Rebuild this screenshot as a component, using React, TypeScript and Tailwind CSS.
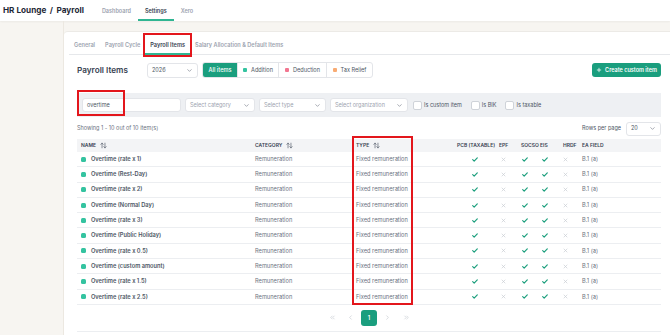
import {
  ArrowUpDown,
  ChevronDown,
  ChevronLeft,
  ChevronRight,
  ChevronsLeft,
  ChevronsRight,
  Plus,
} from "lucide-react";

const rows = [
  "Overtime (rate x 1)",
  "Overtime (Rest-Day)",
  "Overtime (rate x 2)",
  "Overtime (Normal Day)",
  "Overtime (rate x 3)",
  "Overtime (Public Holiday)",
  "Overtime (rate x 0.5)",
  "Overtime (custom amount)",
  "Overtime (rate x 1.5)",
  "Overtime (rate x 2.5)",
];

function Check() {
  return (
    <svg width="6" height="5" viewBox="0 0 14 12" className="text-[#1a9e7c]">
      <path d="M1.5 6.5 L5 10 L12.5 2" fill="none" stroke="currentColor" strokeWidth="2.8" strokeLinecap="round" strokeLinejoin="round" />
    </svg>
  );
}

function Cross() {
  return (
    <svg width="5" height="5" viewBox="0 0 10 10" className="text-[#c9cdd3]">
      <path d="M2 2 L8 8 M8 2 L2 8" fill="none" stroke="currentColor" strokeWidth="1.4" strokeLinecap="round" />
    </svg>
  );
}

function Select({ label, width, muted = true }: { label: string; width: string; muted?: boolean }) {
  return (
    <div
      className={`flex items-center justify-between h-[14px] bg-white border border-[#e3e5e9] rounded-[3px] pl-[4px] pr-[4px] ${width}`}
    >
      <span className={`text-[5.5px] whitespace-nowrap ${muted ? "text-[#9ca3af]" : "text-[#4b5563]"}`}>{label}</span>
      <ChevronDown size={7} className="text-[#6b7280]" strokeWidth={2} />
    </div>
  );
}

function CheckBox({ label }: { label: string }) {
  return (
    <div className="flex items-center gap-[2px]">
      <div className="w-[9px] h-[9px] bg-white border border-[#cfd3d9] rounded-[2px]" />
      <span className="text-[5.5px] text-[#4b5563]">{label}</span>
    </div>
  );
}

function SortHead({ label }: { label: string }) {
  return (
    <div className="flex items-center gap-[4px]">
      <span>{label}</span>
      <ArrowUpDown size={7} strokeWidth={2} className="text-[#374151]" />
    </div>
  );
}

export default function App() {
  return (
    <div className="relative w-[670px] h-[335px] overflow-hidden bg-[#f7f5f1] font-['Inter',sans-serif]">
      <header className="h-[21px] bg-white flex items-stretch pl-[3px] shadow-[0_1px_2px_rgba(0,0,0,0.05)]">
        <div className="flex items-center text-[8.2px] font-bold text-[#1f2937] whitespace-nowrap">
          HR Lounge<span className="mx-[3.5px]">/</span>Payroll
        </div>
        <nav className="flex items-stretch ml-[11px] text-[5.5px] font-semibold whitespace-nowrap">
          <div className="flex items-center px-[7px] pt-[4px] border-b-2 border-transparent text-[#9ca3af]">Dashboard</div>
          <div className="flex items-center px-[7px] pt-[4px] border-b-2 border-[#2fb592] text-[#374151]">Settings</div>
          <div className="flex items-center px-[7px] pt-[4px] border-b-2 border-transparent text-[#9ca3af]">Xero</div>
        </nav>
      </header>

      <div className="flex h-[314px]">
        <div className="w-[64px] shrink-0 border-r border-[#ece8e1]" />
        <div className="flex-1 mt-[10px] bg-white rounded-tl-[4px] border-t border-[#eceae6]">
          <div className="ml-[5px] flex h-[23px] border-b border-[#e6e8eb] text-[5.6px] font-semibold whitespace-nowrap">
            <div className="flex items-center px-[5px] pt-[5px] border-b-2 border-transparent -mb-px text-[#9ca3af]">General</div>
            <div className="flex items-center px-[5px] pt-[5px] border-b-2 border-transparent -mb-px text-[#9ca3af]">Payroll Cycle</div>
            <div className="flex items-center px-[5px] pt-[5px] border-b-2 border-[#2fb592] -mb-px text-[#374151]">Payroll Items</div>
            <div className="flex items-center px-[5px] pt-[5px] border-b-2 border-transparent -mb-px text-[#9ca3af]">Salary Allocation &amp; Default Items</div>
          </div>

          <div className="pl-[13px] pr-[9px]">
            <div className="mt-[7px] h-[16px] flex items-center">
              <h1 className="text-[8.2px] font-semibold text-[#374151] w-[70px] whitespace-nowrap">Payroll Items</h1>
              <div className="flex items-center justify-between w-[51px] h-[15px] border border-[#e3e5e9] rounded-[3px] pl-[4px] pr-[4px]">
                <span className="text-[5.5px] text-[#4b5563]">2026</span>
                <ChevronDown size={7} className="text-[#6b7280]" strokeWidth={2} />
              </div>
              <div className="ml-[4px] flex h-[16px] rounded-[3px] border border-[#e3e5e9] overflow-hidden text-[5.6px] whitespace-nowrap">
                <div className="w-[34px] flex items-center justify-center bg-[#1a9e7e] text-white font-medium">All items</div>
                <div className="w-[41px] flex items-center justify-center gap-[4px] border-l border-[#e3e5e9] text-[#4b5563]">
                  <span className="w-[4px] h-[4px] rounded-[1px] bg-[#34c3a0]" />Addition
                </div>
                <div className="w-[48px] flex items-center justify-center gap-[4px] border-l border-[#e3e5e9] text-[#4b5563]">
                  <span className="w-[4px] h-[4px] rounded-[1px] bg-[#f27690]" />Deduction
                </div>
                <div className="w-[46px] flex items-center justify-center gap-[4px] border-l border-[#e3e5e9] text-[#4b5563]">
                  <span className="w-[4px] h-[4px] rounded-[1px] bg-[#f8ab73]" />Tax Relief
                </div>
              </div>
              <button className="ml-auto w-[69px] h-[14px] flex items-center justify-center gap-[3px] rounded-[3px] bg-[#1a9e7e] text-white text-[5.5px] font-semibold whitespace-nowrap">
                <Plus size={6} strokeWidth={3} />
                Create custom item
              </button>
            </div>

            <div className="mt-[15px] h-[24px] bg-[#eef0f3] flex items-center pl-[5px] gap-[4px]">
              <div className="w-[99px] h-[14px] bg-white border border-[#e3e5e9] rounded-[3px] pl-[4px] flex items-center text-[5.5px] text-[#4b5563]">
                overtime
              </div>
              <Select label="Select category" width="w-[70px]" />
              <Select label="Select type" width="w-[67px]" />
              <Select label="Select organization" width="w-[78px]" />
              <div className="ml-[1px] flex items-center gap-[9px]">
                <CheckBox label="Is custom item" />
                <CheckBox label="Is BIK" />
                <CheckBox label="Is taxable" />
              </div>
            </div>

            <div className="mt-[4px] h-[15px] flex items-center justify-between">
              <span className="text-[5.5px] text-[#6b7280]">Showing 1 - 10 out of 10 item(s)</span>
              <div className="flex items-center gap-[5px]">
                <span className="text-[5.5px] text-[#4b5563]">Rows per page</span>
                <Select label="20" width="w-[35px]" muted={false} />
              </div>
            </div>

            <div className="mt-[3px] whitespace-nowrap">
              <div className="grid grid-cols-[178px_101px_101px_42px_22px_19px_23px_19px_1fr] h-[13px] items-center bg-[#f3f4f6] font-semibold text-[#374151] uppercase text-[5px]">
                <div className="pl-[4px]"><SortHead label="Name" /></div>
                <div><SortHead label="Category" /></div>
                <div><SortHead label="Type" /></div>
                <div>PCB (Taxable)</div>
                <div>EPF</div>
                <div>SOCSO</div>
                <div>EIS</div>
                <div>HRDF</div>
                <div>EA Field</div>
              </div>
              {rows.map((name) => (
                <div
                  key={name}
                  className="grid grid-cols-[178px_101px_101px_42px_22px_19px_23px_19px_1fr] h-[15.3px] items-center border-b border-[#eceef1] text-[5.7px]"
                >
                  <div className="pl-[4px] flex items-center gap-[5px]">
                    <span className="w-[5px] h-[5px] rounded-[1.5px] bg-[#34c3a0]" />
                    <span className="font-semibold text-[#4b5563]">{name}</span>
                  </div>
                  <div className="text-[#6b7280]">Remuneration</div>
                  <div className="text-[#6b7280]">Fixed remuneration</div>
                  <div className="pl-[15px] flex"><Check /></div>
                  <div className="pl-[2px] flex"><Cross /></div>
                  <div className="pl-[1px] flex"><Check /></div>
                  <div className="pl-[2px] flex"><Check /></div>
                  <div className="pl-[0px] flex"><Cross /></div>
                  <div className="text-[#6b7280]">B.1 (a)</div>
                </div>
              ))}
            </div>

            <div className="mt-[5px] flex justify-center items-center gap-[2.5px] text-[#b8bdc5]">
              <div className="w-[16px] h-[16px] flex items-center justify-center"><ChevronsLeft size={7} strokeWidth={1.8} /></div>
              <div className="w-[16px] h-[16px] flex items-center justify-center"><ChevronLeft size={7} strokeWidth={1.8} /></div>
              <div className="w-[16px] h-[16px] flex items-center justify-center rounded-[3px] bg-[#1a9e7e] text-white text-[5.7px] font-semibold">1</div>
              <div className="w-[16px] h-[16px] flex items-center justify-center"><ChevronRight size={7} strokeWidth={1.8} /></div>
              <div className="w-[16px] h-[16px] flex items-center justify-center"><ChevronsRight size={7} strokeWidth={1.8} /></div>
            </div>
            <div className="mt-[5px] border-t border-[#eceef1]" />
          </div>
        </div>
      </div>

      {/* annotation boxes */}
      <div className="absolute left-[143px] top-[33px] w-[49px] h-[24px] border-2 border-[#e3161c]" />
      <div className="absolute left-[77px] top-[90px] w-[48px] h-[26px] border-2 border-[#e3161c]" />
      <div className="absolute left-[352px] top-[136px] w-[61px] h-[169px] border-2 border-[#e3161c]" />
    </div>
  );
}
